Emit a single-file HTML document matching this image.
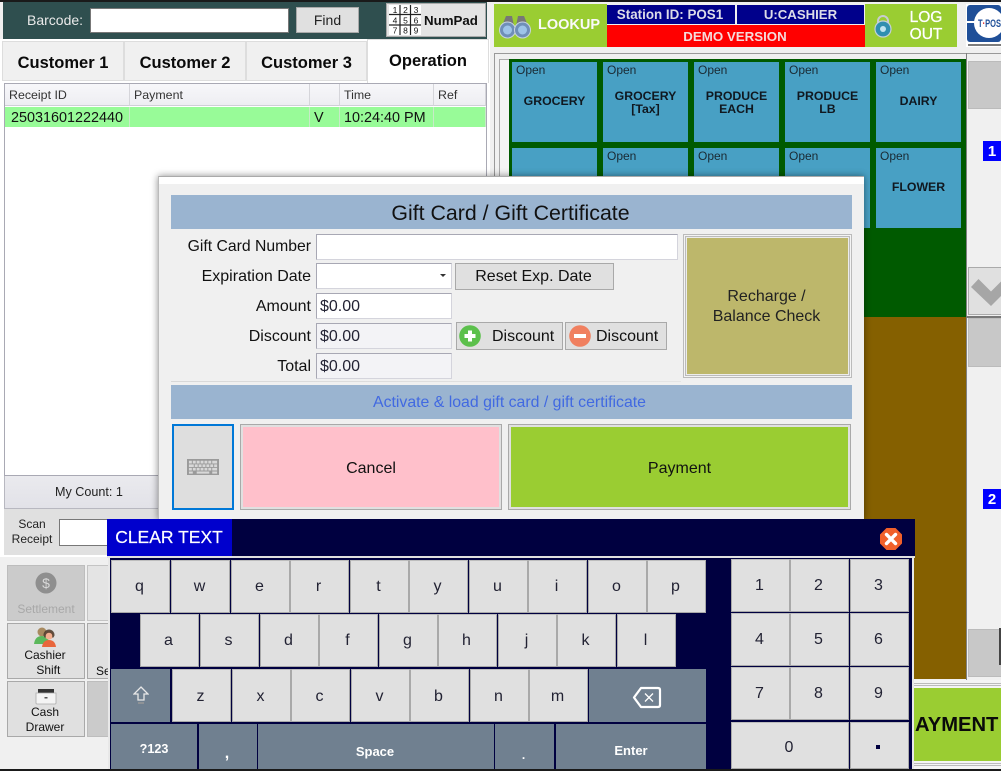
<!DOCTYPE html>
<html><head><meta charset="utf-8"><title>POS</title>
<style>
html,body{margin:0;padding:0;width:1001px;height:771px;overflow:hidden;background:#f0f0f0}
body{position:relative;font-family:"Liberation Sans",sans-serif;color:#111}
div,span.a,svg.a{position:absolute;box-sizing:border-box}
.c{display:flex;align-items:center;justify-content:center;text-align:center}
.t{left:0;width:auto;white-space:nowrap}
.tab{top:41px;height:40px;background:#f0f0f0;border:1px solid #ddd;font-weight:bold;font-size:16.5px;color:#0a0a0a;padding-top:4px}
.th{top:84px;height:22px;background:linear-gradient(#f7f7fa,#eeeef2);border-right:1px solid #d5d5da;border-bottom:1px solid #cfcfd6;font-size:12.4px;color:#333;padding:4px 0 0 4px;white-space:nowrap}
.td{top:107px;height:20px;background:#98fb98;border-right:1px solid #c8eac8;font-size:14.4px;color:#111;white-space:nowrap;padding-top:3px}
.tile{background:#48a0c4;width:85px;height:80px;font-weight:bold;font-size:12.3px;line-height:13px;color:#101820}
.tile i{position:absolute;left:4px;top:1px;font:normal 12px "Liberation Sans",sans-serif;color:#1a2a33}
.tile b{position:absolute;left:0;right:0;text-align:center;top:33px}
.tile b.two{top:28px}
.lb{left:160px;width:151px;text-align:right;font-size:16px;color:#111;height:24px;line-height:24px}
.in{left:316px;width:136px;height:26px;background:#fff;border:1px solid #a8a8b4;border-right-color:#d4d4dc;border-bottom-color:#d4d4dc;font-size:16px;line-height:26px;padding-left:3px;color:#223}
.in.g{background:#f3f3f6}
.bt{background:#e0e0e0;border:1px solid #a9a9a9;font-size:16px;color:#111}
.k{background:#e0e0e0;border:1px solid #a9a9a9;border-top-color:#bdbdbd;font-size:16px;color:#223;width:59px;height:53px;padding-right:2px}
.r3{padding-top:2px}
.d{background:#708090;color:#fff;font-weight:bold;font-size:12px}
.sb{background:#e0e0e0;border:1px solid #a9a9a9;font-size:12px;line-height:15px;color:#111}
</style></head><body>

<!-- top left -->
<div style="left:3px;top:2px;width:484px;height:37px;background:#2f4f4f"></div>
<div style="left:27px;top:12px;font-size:14px;color:#eaeaea">Barcode:</div>
<div style="left:90px;top:8px;width:199px;height:25px;background:#fff;border:1px solid #777"></div>
<div class="c" style="left:296px;top:7px;width:63px;height:26px;background:#e0e0e0;border:1px solid #a9a9a9;font-size:14px;color:#222">Find</div>
<div style="left:386px;top:3px;width:100px;height:34px;background:#e4e4e4;border:1px solid #aaa"></div>
<svg class="a" style="left:389px;top:5px" width="32" height="30" viewBox="0 0 32 30">
<rect width="32" height="30" fill="#fff"/>
<path d="M11 0V30M21.500 0V30M0 9.500H32M0 20H32" stroke="#222" stroke-width="1.200" fill="none"/>
<g font-family="Liberation Sans" font-size="8.500" fill="#111" text-anchor="middle"><text x="6" y="8">1</text><text x="16.500" y="8">2</text><text x="27" y="8">3</text><text x="6" y="18.500">4</text><text x="16.500" y="18.500">5</text><text x="27" y="18.500">6</text><text x="6" y="28.500">7</text><text x="16.500" y="28.500">8</text><text x="27" y="28.500">9</text></g></svg>
<div style="left:424px;top:13px;font-size:13.3px;font-weight:bold;color:#111">NumPad</div>

<!-- tabs -->
<div style="left:0;top:39px;width:490px;height:518px;background:#fff"></div>
<div class="tab c" style="left:2px;width:122px">Customer 1</div>
<div class="tab c" style="left:124px;width:122px">Customer 2</div>
<div class="tab c" style="left:246px;width:121px">Customer 3</div>
<div class="c" style="left:367px;top:39px;width:122px;height:44px;background:#fff;border:1px solid #ddd;border-bottom:none;font-weight:bold;font-size:16.5px;color:#0a0a0a">Operation</div>

<!-- table -->
<div style="left:4px;top:83px;width:483px;height:393px;background:#fff;border:1px solid #a9a9b4"></div>
<div class="th" style="left:5px;width:125px">Receipt ID</div>
<div class="th" style="left:130px;width:180px">Payment</div>
<div class="th" style="left:310px;width:30px"></div>
<div class="th" style="left:340px;width:94px">Time</div>
<div class="th" style="left:434px;width:52px">Ref</div>
<div class="td" style="left:5px;width:125px;padding-left:6px">25031601222440</div>
<div class="td" style="left:130px;width:180px"></div>
<div class="td" style="left:310px;width:30px;padding-left:4px">V</div>
<div class="td" style="left:340px;width:94px;padding-left:4px">10:24:40 PM</div>
<div class="td" style="left:434px;width:52px"></div>
<div class="c" style="left:4px;top:476px;width:483px;height:33px;background:linear-gradient(#eaeaee,#e2e2e8);border:1px solid #b8b8c0;border-top:none;font-size:12.6px;color:#222;justify-content:flex-start;padding-left:50px">My Count: 1</div>
<div style="left:4px;top:509px;width:483px;height:46px;background:#e0e0e0"></div>
<div style="left:4px;top:517px;width:56px;text-align:center;font-size:12px;line-height:15px;color:#222">Scan<br>Receipt</div>
<div style="left:59px;top:519px;width:60px;height:27px;background:#fff;border:1px solid #777"></div>

<!-- left bottom buttons -->
<div class="sb" style="left:7px;top:565px;width:78px;height:56px;background:#cbcbcb;border-color:#bdbdbd"></div>
<svg class="a" style="left:35px;top:572px" width="22" height="22" viewBox="0 0 22 22"><circle cx="11" cy="11" r="10.500" fill="#8f8f8f"/><text x="11" y="16" text-anchor="middle" font-size="14" font-family="Liberation Sans" fill="#d8d8d8">$</text></svg>
<div style="left:7px;top:602px;width:78px;text-align:center;font-size:12px;color:#a8a8a8">Settlement</div>
<div class="sb" style="left:87px;top:565px;width:30px;height:56px;background:#e4e4e4;border-color:#c4c4c4"></div>
<div class="sb" style="left:7px;top:623px;width:78px;height:56px"></div>
<svg class="a" style="left:33px;top:626px" width="26" height="22" viewBox="0 0 26 22"><circle cx="9" cy="6" r="4.500" fill="#a88a60"/><path d="M1 18Q2 10 9 10Q14 10 16 15V18Z" fill="#5cb85c"/><circle cx="16" cy="9" r="4.500" fill="#f2a98a"/><path d="M16 3.500a5.500 5.500 0 0 0-5.500 6l1 2h9l1-2a5.500 5.500 0 0 0-5.500-6Z" fill="#4a3a2a" opacity=".85"/><circle cx="16" cy="10" r="3.300" fill="#f4b090"/><path d="M9 21Q10 14 16 14Q22 14 23 21Z" fill="#e8663c"/></svg>
<div style="left:6px;top:648px;width:78px;text-align:center;font-size:12px;line-height:15px;color:#111">Cashier<br>&nbsp;&nbsp;Shift</div>
<div class="sb" style="left:87px;top:623px;width:30px;height:56px"></div>
<div style="left:96px;top:664px;font-size:12px;color:#111">Se</div>
<div class="sb" style="left:7px;top:681px;width:78px;height:56px"></div>
<svg class="a" style="left:35px;top:688px" width="22" height="17" viewBox="0 0 22 17"><rect x="3" y="1" width="16" height="5" fill="#333"/><path d="M1 5H21V15Q21 16 20 16H2Q1 16 1 15Z" fill="#f4f4f4" stroke="#aaa" stroke-width=".8"/><rect x="9.500" y="9" width="3" height="1.500" fill="#555"/></svg>
<div style="left:6px;top:705px;width:78px;text-align:center;font-size:12px;line-height:15px;color:#111">Cash<br>Drawer</div>
<div class="sb" style="left:87px;top:681px;width:30px;height:56px;background:#cbcbcb;border-color:#bdbdbd"></div>

<!-- top right -->
<div style="left:494px;top:4px;width:113px;height:43px;background:#9acd32"></div>
<svg class="a" style="left:499px;top:13px" width="32" height="26" viewBox="0 0 32 26"><path d="M3 13L7 3H13L15 13ZM17 13L19 3H25L29 13Z" fill="#777"/><circle cx="8.500" cy="17" r="8" fill="#6f8fb8" stroke="#c8d4e0"/><circle cx="8.500" cy="17" r="4.500" fill="#9ec4e8"/><circle cx="23.500" cy="17" r="8" fill="#6f8fb8" stroke="#c8d4e0"/><circle cx="23.500" cy="17" r="4.500" fill="#9ec4e8"/></svg>
<div style="left:538px;top:17px;font-size:14.5px;font-weight:bold;color:#fafafa">LOOKUP</div>
<div class="c" style="left:607px;top:5px;width:128px;height:19px;background:#00008b;font-size:13.4px;font-weight:bold;color:#dcdce8;padding-right:2px">Station ID: POS1</div>
<div class="c" style="left:737px;top:5px;width:127px;height:19px;background:#00008b;font-size:13.2px;font-weight:bold;color:#dcdce8">U:CASHIER</div>
<div class="c" style="left:607px;top:25px;width:258px;height:22px;background:#f00;font-size:13.3px;font-weight:bold;color:#f4dcdc;padding-right:2px">DEMO VERSION</div>
<div style="left:865px;top:4px;width:92px;height:43px;background:#9acd32"></div>
<svg class="a" style="left:874px;top:15px" width="18" height="23" viewBox="0 0 18 23"><path d="M4 10V6a5 5 0 0 1 10 0v4" fill="none" stroke="#c8ccd0" stroke-width="2"/><circle cx="9" cy="14" r="8" fill="#2f8fb0" stroke="#c4d0d8" stroke-width="1.200"/><circle cx="9" cy="14" r="3" fill="#bfe4f0"/></svg>
<div style="left:900px;top:9px;width:52px;text-align:center;font-size:15.5px;line-height:17px;font-weight:normal;color:#fff;-webkit-text-stroke:.3px #fff">LOG<br>OUT</div>
<div style="left:966px;top:4px;width:35px;height:43px;background:#fff"></div>
<svg class="a" style="left:967px;top:5px" width="34" height="38" viewBox="0 0 34 38"><rect width="34" height="37" rx="3" fill="#1f4f98"/><circle cx="22" cy="18" r="15" fill="#fff"/><rect y="16" width="10" height="2" fill="#fff"/><text x="11" y="22" font-family="Liberation Sans" font-weight="bold" font-size="11" fill="#1f4f98" textLength="23" lengthAdjust="spacingAndGlyphs">T<tspan fill="#e02020">·</tspan>POS</text></svg>
<div style="left:968px;top:44px;width:33px;height:2px;background:#444;opacity:.7"></div>

<!-- category panel -->
<div style="left:494px;top:53px;width:507px;height:1px;background:#999"></div>
<div style="left:494px;top:53px;width:1px;height:630px;background:#999"></div>
<div style="left:499px;top:59px;width:10px;height:620px;background:#f4f4f4;border:1px solid #aaa;border-right:none"></div>
<div style="left:509px;top:59px;width:457px;height:258px;background:#005a00"></div>
<div style="left:509px;top:317px;width:457px;height:362px;background:#856000"></div>
<div style="left:966px;top:53px;width:1px;height:627px;background:#808080"></div>

<div class="tile" style="left:512px;top:62px"><i>Open</i><b>GROCERY</b></div>
<div class="tile" style="left:603px;top:62px"><i>Open</i><b class="two">GROCERY<br>[Tax]</b></div>
<div class="tile" style="left:694px;top:62px"><i>Open</i><b class="two">PRODUCE<br>EACH</b></div>
<div class="tile" style="left:785px;top:62px"><i>Open</i><b class="two">PRODUCE<br>LB</b></div>
<div class="tile" style="left:876px;top:62px"><i>Open</i><b>DAIRY</b></div>
<div class="tile" style="left:512px;top:148px"></div>
<div class="tile" style="left:603px;top:148px"><i>Open</i></div>
<div class="tile" style="left:694px;top:148px"><i>Open</i></div>
<div class="tile" style="left:785px;top:148px"><i>Open</i></div>
<div class="tile" style="left:876px;top:148px"><i>Open</i><b>FLOWER</b></div>

<!-- right column -->
<div style="left:968px;top:61px;width:40px;height:48px;background:#c8c8c8;border:1px solid #bbb"></div>
<div class="c" style="left:983px;top:141px;width:18px;height:20px;background:#00f;color:#fff;font-weight:bold;font-size:15px">1</div>
<div style="left:968px;top:267px;width:40px;height:48px;background:#e0e0e0;border:1px solid #aaa"></div>
<svg class="a" style="left:968px;top:267px" width="33" height="48" viewBox="0 0 33 48"><path d="M3 20L10.500 12L23 24.500L33 14.500V29L23 39Z" fill="#a6a6a6"/></svg>
<div style="left:966px;top:316px;width:35px;height:2px;background:#777"></div>
<div style="left:968px;top:318px;width:40px;height:49px;background:#c8c8c8;border:1px solid #bbb"></div>
<div class="c" style="left:983px;top:489px;width:18px;height:20px;background:#00f;color:#fff;font-weight:bold;font-size:15px">2</div>
<div style="left:968px;top:629px;width:40px;height:48px;background:#c8c8c8;border:1px solid #bbb"></div>
<div style="left:999px;top:628px;width:2px;height:37px;background:#444"></div>

<!-- payment -->
<div style="left:905px;top:680px;width:96px;height:89px;background:#f4f4f4"></div>
<div style="left:905px;top:683px;width:96px;height:1px;background:#bbb"></div>
<div style="left:905px;top:685px;width:96px;height:1px;background:#bbb"></div>
<div style="left:905px;top:688px;width:96px;height:73px;background:#9acd32"></div>
<div style="left:905px;top:763px;width:96px;height:1px;background:#bbb"></div>
<div style="left:905px;top:765px;width:96px;height:1px;background:#bbb"></div>
<div style="left:915px;top:714px;font-size:20.2px;font-weight:bold;color:#0a0a0a;white-space:nowrap">AYMENT</div>

<!-- dialog -->
<div style="left:158px;top:176px;width:706px;height:344px;background:#f0f0f0;border-top:1px solid #aaa;border-left:1px solid #bbb;box-shadow:0 0 7px rgba(0,0,0,.45)"></div>
<div style="left:159px;top:177px;width:705px;height:7px;background:#fff"></div>
<div class="c" style="left:171px;top:195px;width:679px;height:34px;background:none;font-size:21.33px;color:#111;padding-top:2px;z-index:2">Gift Card / Gift Certificate</div>
<div style="left:171px;top:195px;width:681px;height:34px;background:#9ab4d0"></div>

<div class="lb" style="top:235px;font-size:15.75px">Gift Card Number</div>
<div class="in" style="top:234px;width:362px"></div>
<div class="lb" style="top:265px">Expiration Date</div>
<div class="in" style="top:263px"></div>
<div style="left:440px;top:274px;width:0;height:0;border-left:3.500px solid transparent;border-right:3.500px solid transparent;border-top:3.500px solid #333"></div>
<div class="bt c" style="left:455px;top:263px;width:159px;height:27px;padding:1px 2px 0 0">Reset Exp. Date</div>
<div class="lb" style="top:295px">Amount</div>
<div class="in" style="top:293px">$0.00</div>
<div class="lb" style="top:325px">Discount</div>
<div class="in g" style="top:323px">$0.00</div>
<div class="bt" style="left:456px;top:322px;width:107px;height:28px"></div>
<svg class="a" style="left:459px;top:325px" width="22" height="22" viewBox="0 0 22 22"><circle cx="11" cy="11" r="10.800" fill="#5cc04c"/><path d="M11 5.500V16.500M5.500 11H16.500" stroke="#fff" stroke-width="4"/></svg>
<div style="left:492px;top:328px;font-size:16px;color:#111">Discount</div>
<div class="bt" style="left:565px;top:322px;width:102px;height:28px"></div>
<svg class="a" style="left:569px;top:325px" width="22" height="22" viewBox="0 0 22 22"><circle cx="11" cy="11" r="10.800" fill="#f08060"/><path d="M5 11H17" stroke="#fff" stroke-width="4"/></svg>
<div style="left:596px;top:328px;font-size:16px;color:#111">Discount</div>
<div class="lb" style="top:355px">Total</div>
<div class="in g" style="top:353px">$0.00</div>
<div style="left:171px;top:381px;width:510px;height:1px;background:linear-gradient(90deg,#d8d8d8,#e4e4e4)"></div>

<div style="left:683px;top:234px;width:169px;height:144px;background:#ececec;border:1px solid #bbb;box-shadow:inset 0 0 0 1px #f4f4f4,inset 0 0 0 2px #bbb"></div>
<div class="c" style="left:687px;top:238px;width:159px;height:136px;background:none;font-size:16px;line-height:20px;color:#222;padding-top:2px;z-index:2">Recharge /<br>Balance Check</div>
<div style="left:687px;top:238px;width:161px;height:136px;background:#bdb76b"></div>

<div class="c" style="left:171px;top:385px;width:677px;height:34px;background:none;font-size:15.85px;color:#4169e1;padding-top:2px;z-index:2">Activate &amp; load gift card / gift certificate</div>
<div style="left:171px;top:385px;width:681px;height:34px;background:#9ab4d0"></div>

<div class="c" style="left:172px;top:424px;width:62px;height:86px;background:#dedede;border:2px solid #0078d7"></div>
<svg class="a" style="left:187px;top:459px" width="32" height="16" viewBox="0 0 33 18" preserveAspectRatio="none"><rect width="33" height="18" fill="#9a9a9a"/><g fill="#d8d8d8"><path d="M2 2h3v3H2zM6 2h3v3H6zM10 2h3v3h-3zM14 2h3v3h-3zM18 2h3v3h-3zM22 2h3v3h-3zM26 2h5v3h-5zM2 6h5v3H2zM8 6h3v3H8zM12 6h3v3h-3zM16 6h3v3h-3zM20 6h3v3h-3zM24 6h3v3h-3zM28 6h3v3h-3zM2 10h3v3H2zM6 10h3v3H6zM10 10h3v3h-3zM14 10h3v3h-3zM18 10h3v3h-3zM22 10h3v3h-3zM26 10h5v3h-5zM2 14h4v2.500H2zM10 14h13v2.500H10zM26 14h5v2.500h-5z"/></g></svg>
<div style="left:240px;top:424px;width:262px;height:86px;background:#e0e0e0;border:1px solid #a9a9a9"></div>
<div class="c" style="left:243px;top:427px;width:256px;height:80px;background:#ffc0cb;font-size:16px;padding-top:3px">Cancel</div>
<div style="left:508px;top:424px;width:343px;height:86px;background:#e0e0e0;border:1px solid #a9a9a9"></div>
<div class="c" style="left:511px;top:427px;width:337px;height:80px;background:#9acd32;font-size:16px;padding-top:3px">Payment</div>

<!-- keyboard -->
<div style="left:107px;top:519px;width:808px;height:37px;background:#000040"></div>
<div class="c" style="left:107px;top:519px;width:125px;height:37px;background:#0000cd;color:#fff;font-size:17.5px;-webkit-text-stroke:.2px #fff;padding-right:1px">CLEAR TEXT</div>
<svg class="a" style="left:880px;top:528px" width="22" height="22" viewBox="0 0 22 22"><path d="M6.500 0H15.500L22 6.500V15.500L15.500 22H6.500L0 15.500V6.500Z" fill="#f0602a"/><path d="M6.500 6.500L15.500 15.500M15.500 6.500L6.500 15.500" stroke="#fff" stroke-width="3.400" stroke-linecap="round"/></svg>
<div style="left:107px;top:556px;width:808px;height:2px;background:#e0e0e0"></div>
<div style="left:108px;top:557px;width:806px;height:212px;background:#000040;border-left:2px solid #e8e8e8;border-right:2px solid #e8e8e8;border-top:1px solid #e0e0e0"></div>

<div class="k c" style="left:111px;top:560px;">q</div>
<div class="k c" style="left:171px;top:560px;">w</div>
<div class="k c" style="left:231px;top:560px;">e</div>
<div class="k c" style="left:290px;top:560px;">r</div>
<div class="k c" style="left:350px;top:560px;">t</div>
<div class="k c" style="left:409px;top:560px;">y</div>
<div class="k c" style="left:469px;top:560px;">u</div>
<div class="k c" style="left:528px;top:560px;">i</div>
<div class="k c" style="left:588px;top:560px;">o</div>
<div class="k c" style="left:647px;top:560px;">p</div>

<div class="k c" style="left:140px;top:614px;">a</div>
<div class="k c" style="left:200px;top:614px;">s</div>
<div class="k c" style="left:260px;top:614px;">d</div>
<div class="k c" style="left:319px;top:614px;">f</div>
<div class="k c" style="left:379px;top:614px;">g</div>
<div class="k c" style="left:438px;top:614px;">h</div>
<div class="k c" style="left:498px;top:614px;">j</div>
<div class="k c" style="left:557px;top:614px;">k</div>
<div class="k c" style="left:617px;top:614px;">l</div>

<div class="d" style="left:111px;top:669px;width:59px;height:53px"></div>
<svg class="a" style="left:133px;top:686px" width="16" height="19" viewBox="0 0 16 19"><path d="M8 1L15 8H11V14H5V8H1Z" fill="none" stroke="#e8e8e8" stroke-width="1.300"/><path d="M5 17H11" stroke="#999" stroke-width="1.500"/></svg>
<div class="k c r3" style="left:172px;top:669px;">z</div>
<div class="k c r3" style="left:232px;top:669px;">x</div>
<div class="k c r3" style="left:291px;top:669px;">c</div>
<div class="k c r3" style="left:351px;top:669px;">v</div>
<div class="k c r3" style="left:410px;top:669px;">b</div>
<div class="k c r3" style="left:470px;top:669px;">n</div>
<div class="k c r3" style="left:529px;top:669px;">m</div>
<div class="d" style="left:589px;top:669px;width:117px;height:53px"></div>
<svg class="a" style="left:632px;top:686px" width="30" height="23" viewBox="0 0 30 23"><path d="M9 2H26Q28 2 28 4V19Q28 21 26 21H9L2 11.500Z" fill="none" stroke="#fff" stroke-width="2.200" stroke-linejoin="round"/><path d="M13 7.500L21 15.500M21 7.500L13 15.500" stroke="#fff" stroke-width="1.300"/></svg>

<div class="d c" style="left:111px;top:724px;width:86px;height:45px;font-size:12.6px;padding-top:4px">?123</div>
<div class="d" style="left:199px;top:724px;width:58px;height:45px;text-align:center;font-size:16px;padding-top:21px;padding-right:2px">,</div>
<div class="d c" style="left:258px;top:724px;width:236px;height:45px;padding-top:9px;font-size:13px;padding-right:2px;padding-bottom:0">Space</div>
<div class="d" style="left:495px;top:724px;width:59px;height:45px;text-align:center;font-size:12px;padding-top:24px;padding-right:2px">.</div>
<div class="d c" style="left:556px;top:724px;width:150px;height:45px;padding-top:7px;padding-bottom:0;font-size:13px">Enter</div>

<div class="k c" style="left:731px;top:559px">1</div>
<div class="k c" style="left:790px;top:559px">2</div>
<div class="k c" style="left:850px;top:559px">3</div>
<div class="k c" style="left:731px;top:613px">4</div>
<div class="k c" style="left:790px;top:613px">5</div>
<div class="k c" style="left:850px;top:613px">6</div>
<div class="k c" style="left:731px;top:667px">7</div>
<div class="k c" style="left:790px;top:667px">8</div>
<div class="k c" style="left:850px;top:667px">9</div>
<div class="k c" style="left:731px;top:722px;width:118px;height:47px;padding-top:5px">0</div>
<div class="k c" style="left:850px;top:722px;height:47px"><span style="position:absolute;left:25px;top:22px;width:4px;height:4px;background:#000040;font-size:0">.</span></div>

<!-- screen edges -->
<div style="left:0;top:0;width:1001px;height:2px;background:#1a1a1a"></div>
<div style="left:0;top:769px;width:1001px;height:2px;background:#1a1a1a"></div>
</body></html>
